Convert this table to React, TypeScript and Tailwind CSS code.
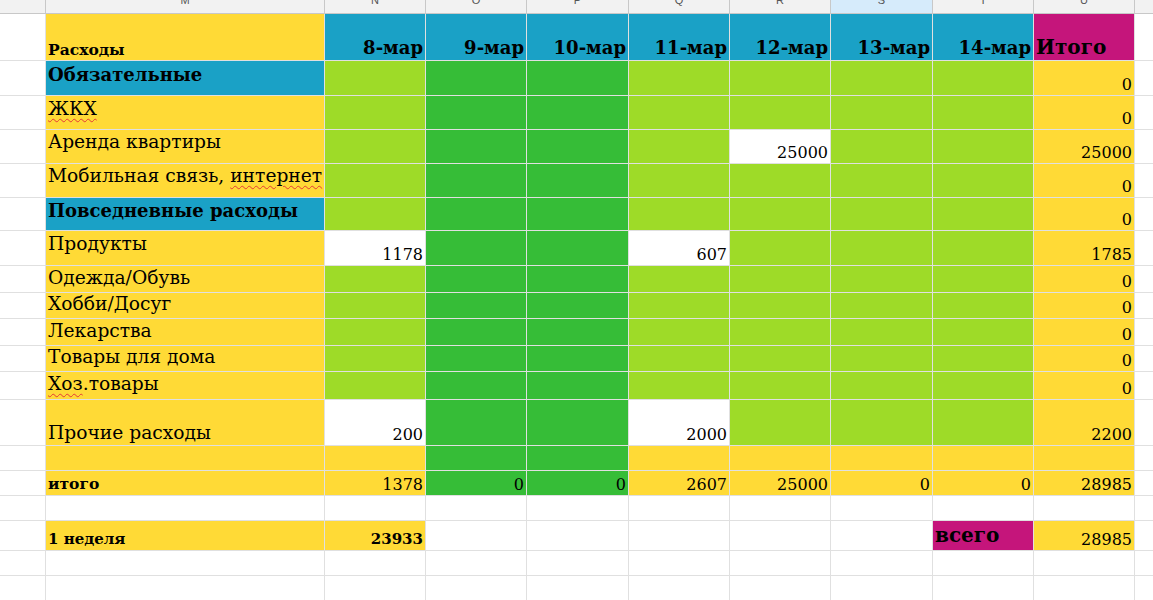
import React from "react";

const Y = "bg-[#ffda36]";
const B = "bg-[#1aa1c6]";
const L = "bg-[#9edb28]";
const G = "bg-[#36bd37]";
const M = "bg-[#c5157b]";
const W = "bg-white";

type C = { bg: string; t?: React.ReactNode; c?: string };

const num = "justify-end items-end pr-[2px] pb-[1px] text-[16px]";
const numB = "justify-end items-end pr-[2px] pb-[2px] text-[15px] font-bold";
const lab = "justify-start items-start pl-[2px] text-[18.67px]";
const labBold = "justify-start items-start pl-[2px] text-[18px] font-bold";
const date = "justify-end items-end pr-[2px] pb-[1px] text-[18px] font-bold";

const wavy = "underline decoration-wavy decoration-[#e53935] decoration-1 underline-offset-[3px]";

const pat = (u: string): C[] => [
  { bg: L },
  { bg: G },
  { bg: G },
  { bg: L },
  { bg: L },
  { bg: L },
  { bg: L },
  { bg: Y, t: u, c: num },
];

const rows: C[][] = [
  [
    { bg: Y, t: "Расходы", c: "justify-start items-end pl-[2px] pb-[1px] text-[15.5px] font-bold" },
    { bg: B, t: "8-мар", c: date },
    { bg: B, t: "9-мар", c: date },
    { bg: B, t: "10-мар", c: date },
    { bg: B, t: "11-мар", c: date },
    { bg: B, t: "12-мар", c: date },
    { bg: B, t: "13-мар", c: date },
    { bg: B, t: "14-мар", c: date },
    { bg: M, t: "Итого", c: "justify-start items-end pl-[2px] pb-[1px] text-[20px] font-bold" },
  ],
  [{ bg: B, t: "Обязательные", c: labBold + " pt-[4px]" }, ...pat("0")],
  [{ bg: Y, t: <span className={wavy}>ЖКХ</span>, c: lab + " pt-[2px]" }, ...pat("0")],
  [
    { bg: Y, t: "Аренда квартиры", c: lab + " pt-[1px]" },
    { bg: L },
    { bg: G },
    { bg: G },
    { bg: L },
    { bg: W, t: "25000", c: num },
    { bg: L },
    { bg: L },
    { bg: Y, t: "25000", c: num },
  ],
  [
    {
      bg: Y,
      t: (
        <span>
          Мобильная связь, <span className={wavy}>интернет</span>
        </span>
      ),
      c: lab + " pt-[1px]",
    },
    ...pat("0"),
  ],
  [{ bg: B, t: "Повседневные расходы", c: labBold + " pt-[3px]" }, ...pat("0")],
  [
    { bg: Y, t: "Продукты", c: lab + " pt-[2px]" },
    { bg: W, t: "1178", c: num },
    { bg: G },
    { bg: G },
    { bg: W, t: "607", c: num },
    { bg: L },
    { bg: L },
    { bg: L },
    { bg: Y, t: "1785", c: num },
  ],
  [{ bg: Y, t: "Одежда/Обувь", c: lab + " pt-[1px]" }, ...pat("0")],
  [{ bg: Y, t: "Хобби/Досуг", c: lab }, ...pat("0")],
  [{ bg: Y, t: "Лекарства", c: lab + " pt-[1px]" }, ...pat("0")],
  [{ bg: Y, t: "Товары для дома", c: lab }, ...pat("0")],
  [
    {
      bg: Y,
      t: (
        <span>
          <span className={wavy}>Хоз</span>.товары
        </span>
      ),
      c: lab + " pt-[1px]",
    },
    ...pat("0"),
  ],
  [
    { bg: Y, t: "Прочие расходы", c: "justify-start items-end pl-[2px] pb-[2px] text-[18.67px]" },
    { bg: W, t: "200", c: num },
    { bg: G },
    { bg: G },
    { bg: W, t: "2000", c: num },
    { bg: L },
    { bg: L },
    { bg: L },
    { bg: Y, t: "2200", c: num },
  ],
  [{ bg: Y }, { bg: Y }, { bg: G }, { bg: G }, { bg: Y }, { bg: Y }, { bg: Y }, { bg: Y }, { bg: Y }],
  [
    { bg: Y, t: "итого", c: "justify-start items-end pl-[2px] pb-[2px] text-[15.5px] font-bold" },
    { bg: Y, t: "1378", c: num },
    { bg: G, t: "0", c: num },
    { bg: G, t: "0", c: num },
    { bg: Y, t: "2607", c: num },
    { bg: Y, t: "25000", c: num },
    { bg: Y, t: "0", c: num },
    { bg: Y, t: "0", c: num },
    { bg: Y, t: "28985", c: num },
  ],
  [W, W, W, W, W, W, W, W, W].map((bg) => ({ bg })),
  [
    { bg: Y, t: "1 неделя", c: "justify-start items-end pl-[2px] pb-[2px] text-[15px] font-bold" },
    { bg: Y, t: "23933", c: numB },
    { bg: W },
    { bg: W },
    { bg: W },
    { bg: W },
    { bg: W },
    { bg: M, t: "всего", c: "justify-start items-end pl-[2px] pb-[3px] text-[20px] font-bold" },
    { bg: Y, t: "28985", c: num },
  ],
  [W, W, W, W, W, W, W, W, W].map((bg) => ({ bg })),
  [W, W, W, W, W, W, W, W, W].map((bg) => ({ bg })),
];

const letters = ["M", "N", "O", "P", "Q", "R", "S", "T", "U"];

export default function App() {
  return (
    <div className="w-[1153px] h-[600px] overflow-hidden bg-white text-black [font-family:'DejaVu_Serif',serif]">
      <div className="grid grid-cols-[45px_278px_100px_100px_101px_100px_100px_101px_100px_100px_1fr] gap-x-px bg-[#c8c8c8] h-[14px] pb-px">
        <div className="bg-[#f2f2f2]" />
        {letters.map((l) => (
          <div
            key={l}
            className={`${l === "S" ? "bg-[#d6ebfb]" : "bg-[#f2f2f2]"} flex justify-center overflow-hidden`}
          >
            <span className="-mt-[6px] text-[11px] leading-[12px] text-[#555] [font-family:'Liberation_Sans',sans-serif]">
              {l}
            </span>
          </div>
        ))}
        <div className="bg-[#f2f2f2]" />
      </div>
      <div className="grid grid-cols-[45px_278px_100px_100px_101px_100px_100px_101px_100px_100px_1fr] grid-rows-[46px_34px_33px_33px_33px_32px_34px_26px_25px_26px_25px_27px_45px_24px_24px_24px_29px_24px_24px] gap-px bg-[#e0e0e0]">
        {rows.map((r, i) => (
          <React.Fragment key={i}>
            <div className="bg-white" />
            {r.map((cell, j) => (
              <div
                key={j}
                className={`${cell.bg} flex overflow-hidden whitespace-nowrap leading-[1.15] ${cell.c ?? ""}`}
              >
                {cell.t}
              </div>
            ))}
            <div className="bg-white" />
          </React.Fragment>
        ))}
      </div>
    </div>
  );
}
